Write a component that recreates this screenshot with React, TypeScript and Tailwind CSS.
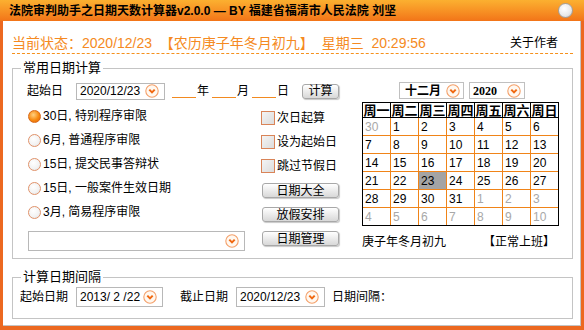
import React from 'react'

const FONT = "font-['Liberation_Sans','Noto_Sans_CJK_SC',sans-serif]"

function DropIcon() {
  return (
    <svg width="14" height="14" viewBox="0 0 14 14" className="shrink-0">
      <circle cx="7" cy="7" r="6.2" fill="#fff8f0" stroke="#f4a06a" strokeWidth="1.1" />
      <path d="M4.3 5.6 L7 8.4 L9.7 5.6" fill="none" stroke="#f06810" strokeWidth="2" />
    </svg>
  )
}

function DateBox({ value, w, h = 'h-[20px]' }: { value: string; w: string; h?: string }) {
  return (
    <div className={`${w} ${h} border border-[#b8b8b8] bg-white flex items-center justify-between pl-[3px] pr-[5px] text-[12px]`}>
      <span>{value}</span>
      <DropIcon />
    </div>
  )
}

function Radio({ checked }: { checked?: boolean }) {
  return checked ? (
    <span className="w-[13px] h-[13px] rounded-full shrink-0 border border-[#d86818] bg-[radial-gradient(circle_at_40%_35%,#ffd080,#f78a10_55%,#e06008)]" />
  ) : (
    <span className="w-[13px] h-[13px] rounded-full shrink-0 border border-[#e0926a] bg-[radial-gradient(circle_at_40%_35%,#ffffff,#f2f2f2_60%,#dcdcdc)]" />
  )
}

function Check() {
  return (
    <span className="w-[14px] h-[14px] shrink-0 border border-[#d98458] bg-gradient-to-br from-[#f4f4f4] to-[#dcdcdc]" />
  )
}

function Btn({ label, w }: { label: string; w: string }) {
  return (
    <div className={`${w} h-[15px] rounded-[3px] border border-[#a8a8a8] bg-gradient-to-b from-[#ffffff] to-[#d8d8d8] shadow-[1px_1px_1px_#c8c8c8] flex items-center justify-center text-[12px] leading-none`}>
      {label}
    </div>
  )
}

function Underline() {
  return <span className="inline-block w-[24px] h-[14px] border-b border-[#f28a20]" />
}

const radios = [
  { label: '30日, 特别程序审限', checked: true },
  { label: '6月, 普通程序审限' },
  { label: '15日, 提交民事答辩状' },
  { label: '15日, 一般案件生效日期' },
  { label: '3月, 简易程序审限' },
]

const checks = ['次日起算', '设为起始日', '跳过节假日']
const weekdays = ['周一', '周二', '周三', '周四', '周五', '周六', '周日']

type Day = { n: number; other?: boolean; today?: boolean }

function buildDays(): Day[] {
  const days: Day[] = [{ n: 30, other: true }]
  for (let i = 1; i <= 31; i++) days.push({ n: i, today: i === 23 })
  for (let i = 1; i <= 10; i++) days.push({ n: i, other: true })
  return days
}

function Calendar() {
  const days = buildDays()
  return (
    <div className="w-[197px] border border-black">
      <div className="grid grid-cols-[repeat(6,28px)_27px]">
        {weekdays.map((d, i) => (
          <div
            key={d}
            className={`h-[15px] border-b border-black flex items-center justify-center text-[13px] font-bold leading-none ${i < 6 ? 'border-r' : ''}`}
          >
            {d}
          </div>
        ))}
      </div>
      <div className="grid grid-cols-[repeat(6,28px)_27px]">
        {days.map((d, i) => {
          const col = i % 7
          const row = Math.floor(i / 7)
          return (
            <div
              key={i}
              className={`flex items-center pl-[2px] text-[12px] leading-none border-[#f08418] ${row < 5 ? 'h-[18px] border-b' : 'h-[17px]'} ${col < 6 ? 'border-r' : ''} ${d.today ? 'bg-[#a4a4a4]' : ''} ${d.other ? 'text-[#a8a8a8]' : 'text-black'}`}
            >
              {d.n}
            </div>
          )
        })}
      </div>
    </div>
  )
}

export default function App() {
  return (
    <div className={`w-[584px] h-[330px] bg-[#ec6820] flex flex-col text-black ${FONT}`}>
      {/* title bar */}
      <div className="h-[21px] bg-gradient-to-b from-[#fbb030] to-[#f27418] flex items-center justify-between pl-[9px] pr-[11px]">
        <span className="text-[12px] font-bold leading-none">
          法院审判助手之日期天数计算器v2.0.0 — BY 福建省福清市人民法院 刘坚
        </span>
        <span className="w-[15px] h-[15px] rounded-full border border-[#a0a0a0] bg-[radial-gradient(circle_at_40%_35%,#ffffff,#e8e8e8_60%,#c4c4c4)]" />
      </div>

      {/* body */}
      <div className="flex-1 mx-[3px] mb-[4px] bg-white border-r border-b border-[#c4c4c4] flex flex-col">
        {/* status */}
        <div className="mt-[12px] ml-[9px] w-[561px] h-[21px] border-b border-dashed border-[#f5901c] flex items-center justify-between pr-[15px]">
          <span className="text-[14px] text-[#f58a22] whitespace-pre leading-none">
            当前状态：2020/12/23  【农历庚子年冬月初九】  星期三  20:29:56
          </span>
          <span className="text-[12px] leading-none">关于作者</span>
        </div>

        {/* common date calc */}
        <fieldset className="mt-[6px] ml-[9px] w-[561px] h-[199px] border border-[#c4c4c4]">
          <legend className="ml-[8px] px-[2px] text-[13px] leading-[16px]">常用日期计算</legend>
          <div className="flex pt-[7px] pl-[14px]">
            {/* left block */}
            <div className="w-[335px] flex flex-col">
              <div className="h-[16px] flex items-center text-[12px]">
                <span className="w-[49px]">起始日</span>
                <DateBox value="2020/12/23" w="w-[89px]" h="h-[17px]" />
                <span className="ml-[7px] flex items-center">
                  <Underline />
                  <span className="ml-[1px]">年</span>
                  <span className="ml-[3px]" />
                  <Underline />
                  <span className="ml-[1px]">月</span>
                  <span className="ml-[3px]" />
                  <Underline />
                  <span className="ml-[1px]">日</span>
                </span>
                <span className="ml-[13px]">
                  <Btn label="计算" w="w-[37px]" />
                </span>
              </div>
              <div className="flex mt-[5px]">
                <div className="w-[218px] ml-[1px] flex flex-col">
                  {radios.map((r) => (
                    <div key={r.label} className="h-[24px] flex items-center text-[12px]">
                      <Radio checked={r.checked} />
                      <span className="ml-[2px] whitespace-pre">{r.label}</span>
                    </div>
                  ))}
                  <div className="mt-[7px]">
                    <DateBox value="" w="w-[217px]" />
                  </div>
                </div>
                <div className="ml-[15px] pt-[2px] flex flex-col">
                  {checks.map((c) => (
                    <div key={c} className="h-[24px] flex items-center text-[12px]">
                      <Check />
                      <span className="ml-[2px]">{c}</span>
                    </div>
                  ))}
                  <div className="ml-[1px] mt-[5px] flex flex-col gap-[9px]">
                    <Btn label="日期大全" w="w-[77px]" />
                    <Btn label="放假安排" w="w-[77px]" />
                    <Btn label="日期管理" w="w-[77px]" />
                  </div>
                </div>
              </div>
            </div>

            {/* calendar */}
            <div className="-mt-[1px] flex flex-col">
              <div className="h-[17px] flex items-center gap-[5px] ml-[37px]">
                <div className="w-[65px] h-[17px] border border-[#c0c0c0] flex items-center justify-between pl-[5px] pr-[3px] text-[12px] font-bold">
                  <span>十二月</span>
                  <DropIcon />
                </div>
                <div className="w-[56px] h-[17px] border border-[#c0c0c0] flex items-center justify-between pl-[3px] pr-[3px] text-[12px] font-bold">
                  <span className="font-['Liberation_Serif',serif]">2020</span>
                  <DropIcon />
                </div>
              </div>
              <div className="mt-[3px]">
                <Calendar />
              </div>
              <div className="mt-[8px] h-[16px] flex items-center justify-between pr-[4px] text-[12px]">
                <span>庚子年冬月初九</span>
                <span>【正常上班】</span>
              </div>
            </div>
          </div>
        </fieldset>

        {/* interval */}
        <fieldset className="mt-[10px] ml-[9px] w-[561px] h-[50px] border border-[#c4c4c4]">
          <legend className="ml-[8px] px-[2px] text-[13px] leading-[16px]">计算日期间隔</legend>
          <div className="pt-[3px] pl-[7px] h-[20px] flex items-center text-[12px]">
            <span className="w-[48px]">起始日期</span>
            <span className="ml-[8px]"><DateBox value="2013/ 2 /22" w="w-[87px]" /></span>
            <span className="ml-[17px] w-[48px]">截止日期</span>
            <span className="ml-[8px]"><DateBox value="2020/12/23" w="w-[89px]" /></span>
            <span className="ml-[7px]">日期间隔：</span>
          </div>
        </fieldset>
      </div>
    </div>
  )
}
